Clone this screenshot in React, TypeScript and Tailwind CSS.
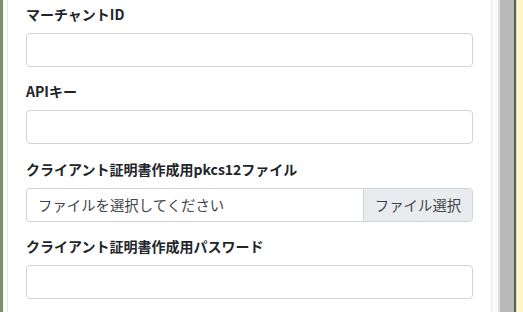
import React from "react";

const font = { fontFamily: '"Noto Sans CJK JP", "Noto Sans", sans-serif' };

function Label({ children }: { children: React.ReactNode }) {
  return (
    <div className="h-[21px] mb-[8px] text-[14px] leading-[21px] font-bold text-[#212529]">{children}</div>
  );
}

function TextInput() {
  return <div className="h-[34px] mb-[14.3px] rounded-[4px] border border-[#ced4da] bg-white" />;
}

export default function App() {
  return (
    <div className="flex h-[312px] w-[523px] overflow-hidden bg-white" style={font}>
      <div className="w-[3px] bg-[#7b9165]" />
      <div className="w-[4px] bg-[#fbfbfb]" />
      <div className="flex-1 border-x border-[#e6e6e6] bg-white px-[18px] pt-[4px]">
        <Label>マーチャントID</Label>
        <TextInput />
        <Label>APIキー</Label>
        <TextInput />
        <Label>クライアント証明書作成用pkcs12ファイル</Label>
        <div className="flex h-[34px] mb-[14.3px] rounded-[4px] border border-[#ced4da] bg-white overflow-hidden">
          <div className="flex-1 pl-[11px] text-[14.4px] leading-[32px] text-[#3f454b]">ファイルを選択してください</div>
          <div className="w-[109px] border-l border-[#ced4da] bg-[#e9ecef] text-center text-[14.4px] leading-[32px] text-[#3f454b]">ファイル選択</div>
        </div>
        <Label>クライアント証明書作成用パスワード</Label>
        <TextInput />
      </div>
      <div className="w-[6px] bg-[#fafafa]" />
      <div className="w-[2px] bg-[#e2e2e2]" />
      <div className="w-[14px] bg-[#b9b9b9]" />
      <div className="w-[2px] bg-[#55634b]" />
      <div className="w-[1px] bg-[#dfe2c4]" />
      <div className="w-[6px] bg-[#fff7c7]" />
    </div>
  );
}
